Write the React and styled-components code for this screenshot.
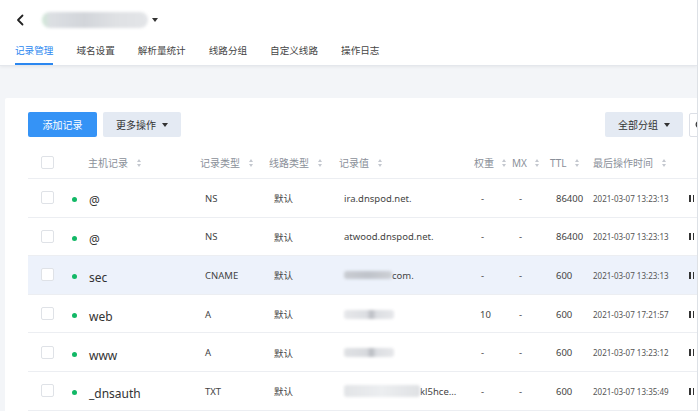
import React from 'react';
import styled, { createGlobalStyle } from 'styled-components';

const Global = createGlobalStyle`
  html, body { margin: 0; padding: 0; background: #fff; }
  body { font-family: "Noto Sans", "Noto Sans CJK SC", sans-serif; }
  * { box-sizing: border-box; }
`;

const Frame = styled.div`
  display: flex;
  width: 700px;
  height: 411px;
  overflow: hidden;
  background: #fff;
`;

const Main = styled.div`
  flex: none;
  width: 698px;
  height: 411px;
  overflow: hidden;
  border-right: 1px solid #dde1e6;
  display: flex;
  flex-direction: column;
  background: #f3f5f8;
`;

const Header = styled.header`
  flex: none;
  height: 66px;
  background: #fff;
  border-bottom: 1px solid #e4e7ec;
  box-shadow: 0 1px 3px rgba(0, 0, 0, 0.06);
  padding-left: 15px;
  display: flex;
  flex-direction: column;
  position: relative;
  z-index: 1;
`;

const TitleRow = styled.div`
  height: 38px;
  padding-top: 2px;
  display: flex;
  align-items: center;
`;

const BackBtn = styled.span`
  display: flex;
  width: 12px;
  margin-right: 15px;
`;

const DomainBlur = styled.span`
  display: inline-block;
  width: 106px;
  height: 16px;
  border-radius: 8px;
  background: linear-gradient(90deg, #cfe8d6 0%, #dcdfe3 8%, #d2d5da 40%, #dfe1e4 70%, #e3e5e8 100%);
  filter: blur(1.6px);
`;

const Caret = styled.span`
  display: inline-block;
  width: 0;
  height: 0;
  border-left: 3px solid transparent;
  border-right: 3px solid transparent;
  border-top: 4px solid ${p => p.$color || '#333'};
  margin-left: ${p => p.$ml ?? 5}px;
`;

const Tabs = styled.nav`
  display: flex;
  gap: 23px;
  height: 27px;
`;

const Tab = styled.span`
  height: 27px;
  padding-top: 6px;
  line-height: 14px;
  font-size: 9.6px;
  color: ${p => (p.$active ? '#2b87f0' : '#444')};
  border-bottom: 2px solid ${p => (p.$active ? '#2b87f0' : 'transparent')};
  white-space: nowrap;
`;

const Body = styled.div`
  flex: 1;
  padding: 32px 0 0 5px;
  overflow: hidden;
`;

const Card = styled.section`
  width: 870px;
  height: 320px;
  background: #fff;
  padding: 14px 26px 0 23px;
  border-radius: 2px;
`;

const Toolbar = styled.div`
  display: flex;
  align-items: center;
  height: 25px;
`;

const Group = styled.div`
  display: flex;
  align-items: center;
  gap: 6px;
  margin-left: ${p => (p.$right ? 'auto' : '0')};
`;

const Button = styled.button`
  height: 25px;
  width: ${p => p.$w}px;
  border: none;
  border-radius: 2px;
  padding: 0;
  font-family: inherit;
  font-size: 10px;
  display: flex;
  align-items: center;
  justify-content: center;
  background: ${p => (p.$primary ? '#3593f6' : '#e4eaf3')};
  color: ${p => (p.$primary ? '#fff' : '#333')};
`;

const Search = styled.div`
  width: 160px;
  height: 24px;
  border: 1px solid #dcdfe6;
  border-radius: 2px;
  display: flex;
  align-items: center;
  padding-left: 5px;
`;

const Table = styled.div`
  margin-top: 10px;
`;

const cols = '34px 134px 68px 70px 135px 38px 38px 43px 95px 40px';

const HeadRow = styled.div`
  display: grid;
  grid-template-columns: ${cols};
  align-items: center;
  height: 32px;
  border-bottom: 1px solid #eceef2;
`;

const Row = styled.div`
  display: grid;
  grid-template-columns: ${cols};
  align-items: center;
  height: 38.6px;
  border-bottom: 1px solid #eceef2;
  background: ${p => (p.$hl ? '#edf2fb' : '#fff')};
`;

const HeadCell = styled.div`
  padding-left: ${p => p.$pl ?? 5}px;
  font-size: 10px;
  color: #8a8f99;
  display: flex;
  align-items: center;
  gap: ${p => p.$gap ?? 9}px;
  white-space: nowrap;
`;

const Cell = styled.div`
  padding-left: ${p => p.$pl ?? 10}px;
  padding-top: 1px;
  font-size: ${p => p.$fs ?? 9.5}px;
  color: ${p => p.$color || '#444'};
  display: flex;
  align-items: center;
  white-space: nowrap;
`;

const Check = styled.span`
  display: block;
  width: 13px;
  height: 13px;
  margin-left: 13px;
  border: 1px solid #dfe2e7;
  border-radius: 2px;
  background: #fff;
`;

const Dot = styled.span`
  display: block;
  width: 5px;
  height: 5px;
  border-radius: 50%;
  background: #12b866;
  margin-right: 12px;
  margin-top: 3px;
`;

const Host = styled.span`
  font-size: 12px;
  color: #333;
  padding-top: 5px;
`;

const Blur = styled.span`
  display: inline-block;
  width: ${p => p.$w}px;
  height: ${p => p.$h ?? 10}px;
  border-radius: 3px;
  background: ${p => p.$bg || '#d3d6db'};
  filter: blur(1.4px);
`;

const Pause = styled.span`
  display: flex;
  gap: 2px;
  &::before, &::after {
    content: '';
    display: block;
    width: 1.6px;
    height: 7px;
    background: #333;
  }
`;

const SortIcon = () => (
  <svg width="4" height="8" viewBox="0 0 4 8">
    <path d="M2 0 L4 3 L0 3 Z M2 8 L4 5 L0 5 Z" fill="#c4c8cf" />
  </svg>
);

const Th = ({ children, pl, gap }) => (
  <HeadCell $pl={pl} $gap={gap}>
    {children}
    <SortIcon />
  </HeadCell>
);

const rows = [
  { host: '@', type: 'NS', value: <span>ira.dnspod.net.</span>, w: '-', ttl: '86400', time: '2021-03-07 13:23:13' },
  { host: '@', type: 'NS', value: <span>atwood.dnspod.net.</span>, w: '-', ttl: '86400', time: '2021-03-07 13:23:13' },
  {
    host: 'sec', type: 'CNAME', hl: true, w: '-', ttl: '600', time: '2021-03-07 13:23:13',
    value: <><Blur $w={48} $h={8} $bg="linear-gradient(90deg,#c9ccd2,#bfc3ca 50%,#cdd0d5)" /><span>com.</span></>,
  },
  {
    host: 'web', type: 'A', w: '10', ttl: '600', time: '2021-03-07 17:21:57',
    value: <Blur $w={50} $h={9} $bg="linear-gradient(90deg,#e6e7ea 0%,#dcdee2 45%,#b9bcc2 55%,#dcdee2 65%,#e6e7ea 100%)" />,
  },
  {
    host: 'www', type: 'A', w: '-', ttl: '600', time: '2021-03-07 13:23:12',
    value: <Blur $w={50} $h={9} $bg="linear-gradient(90deg,#dfe1e4 0%,#d8dade 45%,#b7bac0 55%,#dcdee2 65%,#e6e7ea 100%)" />,
  },
  {
    host: '_dnsauth', type: 'TXT', w: '-', ttl: '600', time: '2021-03-07 13:35:49',
    value: <><Blur $w={76} $h={12} $bg="linear-gradient(90deg,#e2e4e7,#eceef0 50%,#dfe1e4)" /><span>kl5hce...</span></>,
  },
];

export default function App() {
  return (
    <Frame>
      <Global />
      <Main>
        <Header>
          <TitleRow>
            <BackBtn>
              <svg width="10" height="12" viewBox="0 0 10 12">
                <polyline points="7.5,1.5 3,6 7.5,10.5" fill="none" stroke="#222" strokeWidth="1.8" strokeLinecap="round" strokeLinejoin="round" />
              </svg>
            </BackBtn>
            <DomainBlur />
            <Caret $ml={4} />
          </TitleRow>
          <Tabs>
            <Tab $active>记录管理</Tab>
            <Tab>域名设置</Tab>
            <Tab>解析量统计</Tab>
            <Tab>线路分组</Tab>
            <Tab>自定义线路</Tab>
            <Tab>操作日志</Tab>
          </Tabs>
        </Header>
        <Body>
          <Card>
            <Toolbar>
              <Group>
                <Button $primary $w={69}>添加记录</Button>
                <Button $w={78}>更多操作<Caret $ml={6} /></Button>
              </Group>
              <Group $right>
                <Button $w={78}>全部分组<Caret $ml={6} /></Button>
                <Search>
                  <svg width="10" height="10" viewBox="0 0 10 10">
                    <circle cx="4.5" cy="4.5" r="3.3" fill="none" stroke="#333" strokeWidth="1.3" />
                    <line x1="7" y1="7" x2="9.3" y2="9.3" stroke="#333" strokeWidth="1.3" />
                  </svg>
                </Search>
              </Group>
            </Toolbar>
            <Table>
              <HeadRow>
                <div><Check /></div>
                <Th pl={26}>主机记录</Th>
                <Th pl={4}>记录类型</Th>
                <Th>线路类型</Th>
                <Th>记录值</Th>
                <Th gap={8}>权重</Th>
                <Th gap={8}>MX</Th>
                <Th gap={8}>TTL</Th>
                <Th>最后操作时间</Th>
                <div />
              </HeadRow>
              {rows.map((r, i) => (
                <Row key={i} $hl={r.hl}>
                  <div><Check /></div>
                  <Cell><Dot /><Host>{r.host}</Host></Cell>
                  <Cell $pl={9}>{r.type}</Cell>
                  <Cell>默认</Cell>
                  <Cell>{r.value}</Cell>
                  <Cell $pl={r.w === '-' ? 12 : 11}>{r.w}</Cell>
                  <Cell $pl={12}>-</Cell>
                  <Cell $pl={11}>{r.ttl}</Cell>
                  <Cell $pl={5} $fs={8} $color="#555">{r.time}</Cell>
                  <Cell $pl={6}><Pause /></Cell>
                </Row>
              ))}
            </Table>
          </Card>
        </Body>
      </Main>
    </Frame>
  );
}
